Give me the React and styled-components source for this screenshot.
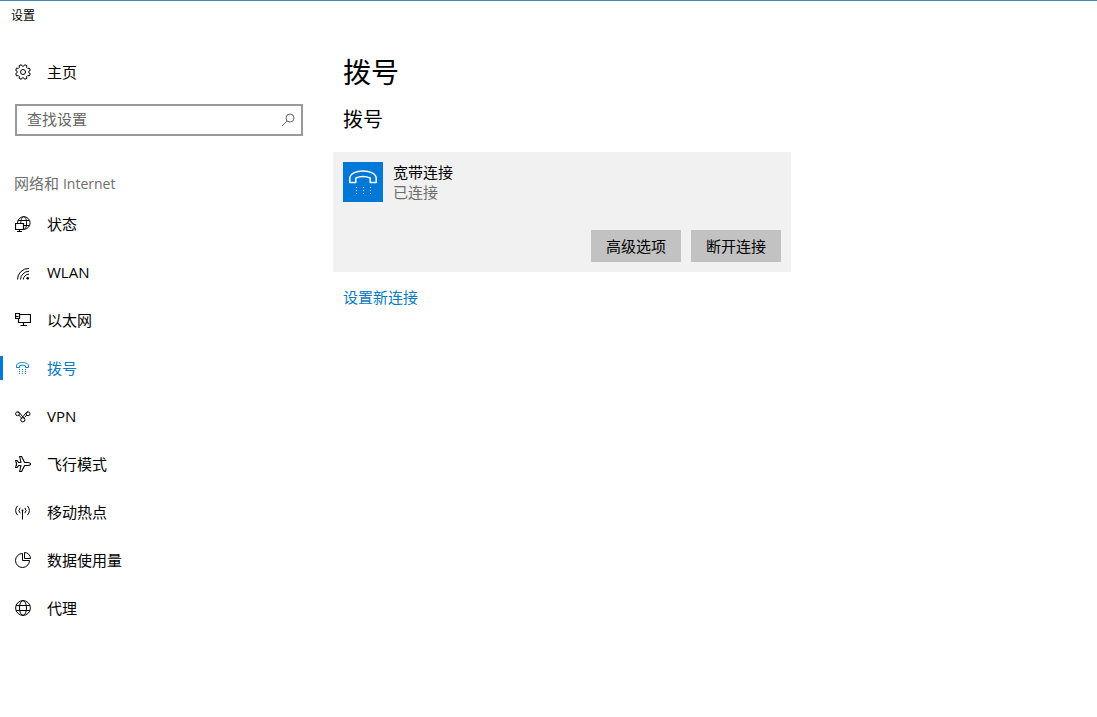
import React, { useState } from "react";
import styled, { createGlobalStyle } from "styled-components";

const GlobalStyle = createGlobalStyle`
	* {
		box-sizing: border-box;
	}

	body {
		margin: 0;
		background-color: #fff;
		color: #000;
		font-family: "Open Sans", "Noto Sans CJK SC", sans-serif;
		font-size: 15px;
		line-height: 20px;
	}
`;

const Window = styled.div`
	min-height: 100vh;
	display: flex;
	flex-direction: column;
	border-top: 1px solid #4a85b5;
`;
const TitleBar = styled.header`
	padding: 5px 11px 6px;
	font-size: 12px;
`;
const Body = styled.div`
	flex-grow: 1;
	display: flex;
`;
const Sidebar = styled.aside`
	width: 318px;
	flex-shrink: 0;
	padding-top: 16px;
`;
const NavItem = styled.a`
	height: 48px;
	padding-left: 15px;
	display: flex;
	align-items: center;
	gap: 16px;
	position: relative;
	color: ${(props) => (props.$active ? "#0a7bc0" : "#000")};
	text-decoration: none;

	&::before {
		content: "";
		display: ${(props) => (props.$active ? "block" : "none")};
		position: absolute;
		left: 0;
		top: 12px;
		width: 3px;
		height: 24px;
		background-color: #0078d7;
	}
`;
const SearchBox = styled.label`
	height: 32px;
	margin: 8px 15px 0;
	padding: 0 6px 0 10px;
	display: flex;
	align-items: center;
	border: 2px solid #999;
	color: #666;

	input {
		flex-grow: 1;
		min-width: 0;
		height: 28px;
		padding: 0 0 2px;
		border: none;
		outline: none;
		background: none;
		font: inherit;
		color: #000;
	}

	input::placeholder {
		color: #666;
		opacity: 1;
	}
`;
const GroupTitle = styled.h3`
	height: 20px;
	margin: 37px 14px 7px;
	font-size: 15px;
	font-weight: 400;
	color: #6d6d6d;
`;
const Latin = styled.span`
	font-size: 14px;
`;
const Main = styled.main`
	flex-grow: 1;
	padding: 20px 15px 0;
`;
const PageTitle = styled.h1`
	margin: 0 10px;
	font-size: 28px;
	font-weight: 400;
	line-height: 40px;
`;
const SectionTitle = styled.h2`
	margin: 12px 10px 16px;
	font-size: 20px;
	font-weight: 400;
	line-height: 32px;
`;
const Card = styled.section`
	max-width: 458px;
	padding: 10px;
	background-color: #f1f1f1;
`;
const Connection = styled.div`
	display: flex;
	gap: 10px;
`;
const Tile = styled.div`
	width: 40px;
	height: 40px;
	display: flex;
	align-items: center;
	justify-content: center;
	background-color: #0078d7;
	color: #fff;
`;
const Status = styled.div`
	color: #6d6d6d;
`;
const Actions = styled.div`
	margin-top: 28px;
	display: flex;
	justify-content: flex-end;
	gap: 10px;
`;
const Button = styled.button`
	width: 90px;
	height: 32px;
	padding: 0;
	border: none;
	background-color: #c2c2c2;
	color: #000;
	font: inherit;
`;
const NewLink = styled.a`
	display: inline-block;
	margin: 15px 10px;
	color: #0a7bc0;
	text-decoration: none;
`;
const Svg = styled.svg`
	flex-shrink: 0;
	display: block;
	fill: none;
	stroke: currentColor;
	stroke-width: ${(props) => props.$weight || 1};
`;

const Icon = ({ children }) => (
	<Svg width="16" height="16" viewBox="0 0 16 16" aria-hidden="true">
		{children}
	</Svg>
);

// outline of the eight-toothed home gear
const teeth = Array.from({ length: 8 }, (_, i) =>
	[
		[5.9, -15],
		[7.5, -9],
		[7.5, 9],
		[5.9, 15],
	].map(([r, offset]) => {
		const a = ((i * 45 + 22.5 + offset) * Math.PI) / 180;
		return `${(8 + r * Math.cos(a)).toFixed(2)},${(8 + r * Math.sin(a)).toFixed(2)}`;
	})
)
	.flat()
	.join(" ");

const GearIcon = () => (
	<Icon>
		<polygon points={teeth} strokeLinejoin="round" />
		<circle cx="8" cy="8" r="2.5" />
	</Icon>
);

const StatusIcon = () => (
	<Icon>
		<path d="M2.5 7A6.3 6.3 0 1 1 9 13.3" />
		<path d="M5.8 7C5.8 3.5 7 .7 8.7 .7S11.6 3.5 11.6 7 10.8 12.5 9.5 13.2" />
		<path d="M3.2 4.5H14.3M9 9.5H14.3" />
		<path d="M.5 7.5H8.5V13.5H.5ZM4.5 13.5V15.5M2 15.5H7" strokeWidth="1.2" />
	</Icon>
);

const WlanIcon = () => (
	<Icon>
		<path d="M2.5 15.5A11 11 0 0 1 14 4.5M5.5 15.5A8.5 8.5 0 0 1 14 7.3M8.3 15.5A5.8 5.8 0 0 1 14 10.1" />
		<circle cx="12.7" cy="14.2" r="1.3" fill="currentColor" stroke="none" />
	</Icon>
);

const EthernetIcon = () => (
	<Icon>
		<path d="M.5 1.5H4.5V6.5H.5ZM4.5 2.5H15.5V10.5H3.5V6.5M8.5 10.5V13.5M5.5 13.5H12" strokeWidth="1.2" />
		<path d="M1 4.5H3.5" />
	</Icon>
);

const DialIcon = () => (
	<Icon>
		<path d="M1.5 7.5V6C1.5 3.5 4.5 2.5 7.5 2.5S13.5 3.5 13.5 6V7.5H10.5V5.8C9 5.1 6 5.1 4.5 5.8V7.5Z" />
		<path d="M4 9.5H11M4 11.5H11M4 13.5H11" strokeDasharray="1 2" />
	</Icon>
);

const VpnIcon = () => (
	<Icon>
		<circle cx="2.5" cy="5.8" r="1.9" />
		<circle cx="13.1" cy="5.8" r="1.9" />
		<circle cx="7.8" cy="11.8" r="2.1" />
		<path d="M2.5 3.9C5 3.9 5.6 7.2 9.6 10.6M13.1 3.9C10.6 3.9 10 7.2 6 10.6M4 7.2L6 9.6M11.6 7.2L9.6 9.6" />
	</Icon>
);

const PlaneIcon = () => (
	<Icon>
		<path
			d="M15.5 8C15.5 7 14.2 6.5 12.8 6.5H9.6L6.6 .5H4.6L6 6.5H3.6L2.2 4.5H.6L1.6 8L.6 11.5H2.2L3.6 9.5H6L4.6 15.5H6.6L9.6 9.5H12.8C14.2 9.5 15.5 9 15.5 8Z"
			strokeLinejoin="round"
			strokeWidth="1.1"
		/>
	</Icon>
);

const HotspotIcon = () => (
	<Icon>
		<path d="M7.5 7V15.5" />
		<circle cx="7.5" cy="6.5" r="1" fill="currentColor" stroke="none" />
		<path d="M5.2 3.8A3.8 3.8 0 0 0 5.2 9.2M9.8 3.8A3.8 3.8 0 0 1 9.8 9.2" />
		<path d="M2.6 1.8A6.6 6.6 0 0 0 2.6 11.2M12.4 1.8A6.6 6.6 0 0 1 12.4 11.2" />
	</Icon>
);

const DataIcon = () => (
	<Icon>
		<path d="M7.5 1.5A7 7 0 1 0 14.5 8.5H7.5Z" />
		<path d="M9.5 .5V6.5H15.5A6 6 0 0 0 9.5 .5Z" />
	</Icon>
);

const ProxyIcon = () => (
	<Icon>
		<circle cx="8" cy="8" r="7.4" />
		<ellipse cx="8" cy="8" rx="3.5" ry="7.4" />
		<path d="M1.2 5.5H14.8M1.2 10.5H14.8" />
	</Icon>
);

const SearchIcon = () => (
	<Svg width="14" height="14" viewBox="0 0 14 14" aria-hidden="true">
		<circle cx="9" cy="5" r="4" />
		<path d="M6 8L1 13" />
	</Svg>
);

const DialTileIcon = () => (
	<Svg width="28" height="24" viewBox="0 0 28 24" $weight={1.5} aria-hidden="true">
		<path
			d="M.8 12.4V8.5C.8 3.5 7 1 14 1S27.2 3.5 27.2 8.5V12.4H21.2V8C17 6.3 11 6.3 6.8 8V12.4Z"
			strokeLinejoin="round"
		/>
		<path d="M7 17.5H22M7 20.5H22M7 23.5H22" strokeDasharray="1 6" strokeWidth="1" />
	</Svg>
);

const items = [
	{ id: "status", label: "状态", icon: StatusIcon },
	{ id: "wlan", label: "WLAN", icon: WlanIcon },
	{ id: "ethernet", label: "以太网", icon: EthernetIcon },
	{ id: "dialup", label: "拨号", icon: DialIcon },
	{ id: "vpn", label: "VPN", icon: VpnIcon },
	{ id: "airplane", label: "飞行模式", icon: PlaneIcon },
	{ id: "hotspot", label: "移动热点", icon: HotspotIcon },
	{ id: "data", label: "数据使用量", icon: DataIcon },
	{ id: "proxy", label: "代理", icon: ProxyIcon },
];

const App = () => {
	const [active, setActive] = useState("dialup");
	const [query, setQuery] = useState("");

	return (
		<Window lang="zh-CN">
			<GlobalStyle />
			<TitleBar>设置</TitleBar>

			<Body>
				<Sidebar>
					<NavItem href="#home">
						<GearIcon />
						主页
					</NavItem>

					<SearchBox>
						<input
							type="text"
							aria-label="查找设置"
							placeholder="查找设置"
							value={query}
							onChange={(e) => setQuery(e.target.value)}
						/>
						<SearchIcon />
					</SearchBox>

					<GroupTitle>
						网络和 <Latin>Internet</Latin>
					</GroupTitle>

					<nav>
						{items.map(({ id, label, icon: ItemIcon }) => (
							<NavItem
								key={id}
								href={`#${id}`}
								$active={id === active}
								onClick={() => setActive(id)}
							>
								<ItemIcon />
								{label}
							</NavItem>
						))}
					</nav>
				</Sidebar>

				<Main>
					<PageTitle>拨号</PageTitle>
					<SectionTitle>拨号</SectionTitle>

					<Card>
						<Connection>
							<Tile>
								<DialTileIcon />
							</Tile>
							<div>
								<div>宽带连接</div>
								<Status>已连接</Status>
							</div>
						</Connection>

						<Actions>
							<Button type="button">高级选项</Button>
							<Button type="button">断开连接</Button>
						</Actions>
					</Card>

					<NewLink href="#new">设置新连接</NewLink>
				</Main>
			</Body>
		</Window>
	);
};

export default App;
